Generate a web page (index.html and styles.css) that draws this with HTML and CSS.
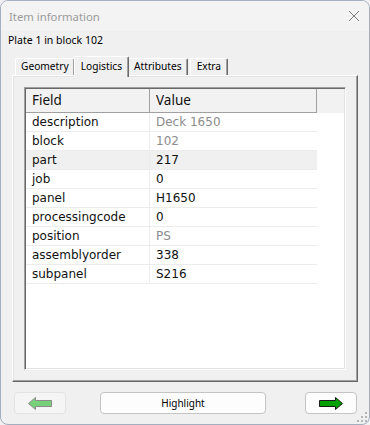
FILE: index.html
```html
<!DOCTYPE html>
<html lang="en">
<head>
    <meta charset="UTF-8">
    <title>Item information</title>
    <link rel="stylesheet" href="styles.css">
</head>
<body>

<div class="window">
    <div class="titlebar">
        <span class="title">Item information</span>
        <svg class="close" width="12" height="12" viewBox="0 0 12 12">
            <path d="M1 1 L11 11 M11 1 L1 11" stroke="#7a7a7a" stroke-width="1" fill="none"/>
        </svg>
    </div>

    <div class="content">
        <div class="caption">Plate 1 in block 102</div>

        <div class="tabs">
            <div class="tab">Geometry</div>
            <div class="tab active">Logistics</div>
            <div class="tab">Attributes</div>
            <div class="tab extra">Extra</div>
        </div>

        <div class="panel">
            <div class="list">
                <div class="list-head">
                    <div class="hcell">Field</div>
                    <div class="hcell">Value</div>
                    <div class="hcell filler"></div>
                </div>
                <div class="rows">
                    <div class="cell">description</div><div class="cell grey">Deck 1650</div>
                    <div class="cell">block</div><div class="cell grey">102</div>
                    <div class="cell hot">part</div><div class="cell hot">217</div>
                    <div class="cell">job</div><div class="cell">0</div>
                    <div class="cell">panel</div><div class="cell">H1650</div>
                    <div class="cell">processingcode</div><div class="cell">0</div>
                    <div class="cell">position</div><div class="cell grey">PS</div>
                    <div class="cell">assemblyorder</div><div class="cell">338</div>
                    <div class="cell">subpanel</div><div class="cell">S216</div>
                </div>
            </div>
        </div>

        <div class="buttons">
            <button class="nav disabled">
                <svg width="24" height="13" viewBox="0 0 24 13">
                    <polygon points="0.5,6.5 7.5,0.5 7.5,3.5 23.5,3.5 23.5,9.5 7.5,9.5 7.5,12.5" fill="#78d178" stroke="#8a8a8a" stroke-width="1"/>
                </svg>
            </button>
            <button class="highlight">Highlight</button>
            <button class="nav next">
                <svg width="24" height="13" viewBox="0 0 24 13">
                    <polygon points="23.5,6.5 16.5,0.5 16.5,3.5 0.5,3.5 0.5,9.5 16.5,9.5 16.5,12.5" fill="#00a000" stroke="#1a1a1a" stroke-width="1"/>
                </svg>
            </button>
        </div>
    </div>

    <!-- size grip -->
    <svg class="grip" width="12" height="12" viewBox="0 0 12 12">
        <rect x="9" y="1" width="2" height="2" fill="#b4b4b4"/>
        <rect x="5" y="5" width="2" height="2" fill="#b4b4b4"/>
        <rect x="9" y="5" width="2" height="2" fill="#b4b4b4"/>
        <rect x="1" y="9" width="2" height="2" fill="#b4b4b4"/>
        <rect x="5" y="9" width="2" height="2" fill="#b4b4b4"/>
        <rect x="9" y="9" width="2" height="2" fill="#b4b4b4"/>
    </svg>
</div>

</body>
</html>
```

FILE: styles.css
```css
html, body {
    margin: 0;
    padding: 0;
    background-color: #f0f0f0;
}
.window {
    position: relative;
    box-sizing: border-box;
    width: 370px;
    height: 425px;
    border: 1px solid #a3afbf;
    border-radius: 8px;
    background-color: #f0f0f0;
    display: flex;
    flex-direction: column;
    overflow: hidden;
    font-family: "Noto Sans", sans-serif;
    color: #000;
}
.titlebar {
    height: 30px;
    flex: none;
    display: flex;
    align-items: center;
    justify-content: space-between;
    padding: 0 9px 0 8px;
    background-color: #f3f3f3;
}
.title {
    font-size: 11.3px;
    color: #9b9b9b;
}
.close {
    display: block;
}
.content {
    flex: 1;
    display: flex;
    flex-direction: column;
    padding: 0 11px;
}
.caption {
    font-size: 10.5px;
    line-height: 16px;
    margin-top: 1px;
    margin-left: -4px;
}

/* Tabs */
.tabs {
    display: flex;
    align-items: flex-end;
    height: 19px;
    margin-top: 8px;
    padding-left: 3px;
}
.tab {
    box-sizing: border-box;
    height: 17px;
    padding: 0 5px;
    font-size: 10.2px;
    line-height: 15px;
    background-color: #f0f0f0;
    border-top: 1px solid #fff;
    border-left: 1px solid #fff;
    border-right: 1px solid #696969;
    border-top-left-radius: 2px;
    border-top-right-radius: 2px;
    box-shadow: inset -1px 0 0 #a0a0a0;
}
.tab.active {
    position: relative;
    z-index: 1;
    height: 21px;
    margin: 0 -1px -2px -1px;
    padding: 0 6px;
    line-height: 18px;
}
.tab.extra {
    margin-left: 2px;
    padding: 0 6px;
}

/* Panel */
.panel {
    flex: 1;
    box-sizing: border-box;
    border-top: 1px solid #fff;
    border-left: 1px solid #fff;
    border-right: 1px solid #696969;
    border-bottom: 1px solid #696969;
    box-shadow: inset -1px -1px 0 #a0a0a0, inset 1px 1px 0 #e3e3e3;
    padding: 11px;
    display: flex;
}
.list {
    flex: 1;
    background-color: #fff;
    border-top: 1px solid #a0a0a0;
    border-left: 1px solid #a0a0a0;
    border-right: 1px solid #fff;
    border-bottom: 1px solid #fff;
    box-shadow: inset 1px 1px 0 #696969, inset -1px -1px 0 #e3e3e3;
    padding: 1px 1px 0 1px;
    font-family: "DejaVu Sans", sans-serif;
    font-size: 12px;
    color: #111;
}
.list-head {
    display: grid;
    grid-template-columns: 124px 167px 1fr;
    height: 24px;
    background-color: #f2f2f2;
}
.hcell {
    box-sizing: border-box;
    border-right: 1px solid #a0a0a0;
    border-bottom: 1px solid #a0a0a0;
    padding-left: 6px;
    font-family: "Noto Sans", sans-serif;
    font-size: 13.5px;
    line-height: 23px;
}
.hcell.filler {
    border-right: none;
    border-bottom: none;
}
.rows {
    display: grid;
    grid-template-columns: 124px 167px;
    grid-auto-rows: 19px;
}
.cell {
    box-sizing: border-box;
    border-bottom: 1px solid #ececec;
    padding-left: 6px;
    line-height: 18px;
    white-space: nowrap;
}
.cell:nth-child(odd) {
    border-right: 1px solid #ececec;
}
.cell.hot {
    background-color: #f0f0f0;
}
.cell.grey {
    color: #8c8c8c;
}

/* Buttons */
.buttons {
    display: flex;
    align-items: center;
    height: 22px;
    margin: 10px 1px 10px 2px;
}
button {
    box-sizing: border-box;
    height: 22px;
    margin: 0;
    padding: 0;
    border: 1px solid #c4c4c4;
    border-radius: 4px;
    background-color: #fdfdfd;
    font-family: "Noto Sans", sans-serif;
    font-size: 10px;
    color: #000;
    display: flex;
    align-items: center;
    justify-content: center;
}
.nav {
    width: 52px;
}
.nav.disabled {
    background-color: #f5f5f5;
    border-color: #e3e3e3;
}
.nav.next {
    margin-left: auto;
}
.highlight {
    width: 166px;
    margin-left: 34px;
}
.grip {
    position: absolute;
    right: 1px;
    bottom: 1px;
}
```
